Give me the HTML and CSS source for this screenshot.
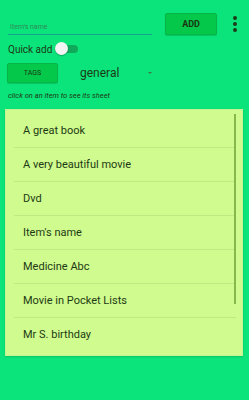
FILE: index.html
```html
<!DOCTYPE html>
<html lang="en">
<head>
  <meta charset="UTF-8">
  <meta name="viewport" content="width=device-width, initial-scale=1.0">
  <title>Pocket Lists</title>
  <link rel="stylesheet" href="styles.css">
</head>
<body>

<div class="topRow">
  <div class="nameField">
    <input type="text" class="nameInput" placeholder="Item's name">
  </div>
  <button class="addButton">ADD</button>
  <div class="menuDots">
    <span></span><span></span><span></span>
  </div>
</div>

<div class="quickRow">
  <span class="quickLabel">Quick add</span>
  <div class="switch">
    <div class="track"></div>
    <div class="thumb"></div>
  </div>
</div>

<div class="tagsRow">
  <button class="tagsButton">TAGS</button>
  <div class="tagSelect">
    <span class="tagName">general</span>
    <span class="arrow"></span>
  </div>
</div>

<p class="hint">click on an item to see its sheet</p>

<div class="listPanel">
  <ul class="itemList">
    <li>A great book</li>
    <li>A very beautiful movie</li>
    <li>Dvd</li>
    <li>Item's name</li>
    <li>Medicine Abc</li>
    <li>Movie in Pocket Lists</li>
    <li>Mr S. birthday</li>
  </ul>
  <div class="scrollBar"></div>
</div>

</body>
</html>
```

FILE: styles.css
```css
body {
  margin: 0;
  padding: 0;
  width: 249px;
  height: 400px;
  background: #0be47b;
  font-family: Roboto, "Noto Sans", sans-serif;
  color: #1f3814;
}

/* top bar: name input + add button + overflow menu */
.topRow {
  display: flex;
  align-items: center;
  padding: 13px 0 0 8px;
  height: 22px;
}

.nameField {
  width: 144px;
  height: 22px;
  display: flex;
  align-items: flex-end;
}

.nameInput {
  width: 100%;
  border: none;
  border-bottom: 1px solid #1a9f93;
  background: none;
  outline: none;
  font-family: inherit;
  font-size: 7px;
  padding: 0 0 3px 2px;
  color: #1f3814;
}

.nameInput::placeholder {
  color: #2f8a5a;
}

.addButton {
  margin-left: 13px;
  width: 52px;
  height: 22px;
  background: #04c84a;
  border: 1px solid #06b544;
  border-radius: 2px;
  box-shadow: 0 1px 1px rgba(0, 0, 0, 0.15);
  font-family: inherit;
  font-size: 9px;
  font-weight: 700;
  color: #1b3512;
  padding: 0;
}

.menuDots {
  margin-left: 16px;
  display: flex;
  flex-direction: column;
  gap: 2px;
}

.menuDots span {
  width: 4px;
  height: 4px;
  border-radius: 50%;
  background: #1d3a1a;
}

/* quick add switch */
.quickRow {
  display: flex;
  align-items: center;
  padding: 7px 0 0 8px;
  height: 14px;
}

.quickLabel {
  font-size: 10px;
  color: #1d3a14;
}

.switch {
  position: relative;
  width: 24px;
  height: 14px;
  margin-left: 3px;
}

.track {
  position: absolute;
  left: 4px;
  top: 3px;
  width: 19px;
  height: 8px;
  border-radius: 4px;
  background: #10a85a;
}

.thumb {
  position: absolute;
  left: 0;
  top: 0;
  width: 13px;
  height: 13px;
  border-radius: 50%;
  background: #f4f4f4;
  box-shadow: 0 1px 1px rgba(0, 0, 0, 0.25);
}

/* tags row */
.tagsRow {
  display: flex;
  align-items: center;
  padding: 7px 0 0 7px;
  height: 20px;
}

.tagsButton {
  width: 51px;
  height: 20px;
  background: #04c84a;
  border: 1px solid #06b544;
  border-radius: 2px;
  box-shadow: 0 1px 1px rgba(0, 0, 0, 0.15);
  font-family: inherit;
  font-size: 7px;
  color: #1b3512;
  padding: 0;
}

.tagSelect {
  display: flex;
  align-items: center;
  margin-left: 22px;
  width: 72px;
}

.tagName {
  font-size: 12px;
  color: #1d3a14;
  flex: 1;
}

.arrow {
  width: 0;
  height: 0;
  border-left: 2px solid transparent;
  border-right: 2px solid transparent;
  border-top: 2px solid #3a7a4a;
}

.hint {
  margin: 0;
  padding: 8px 0 0 8px;
  height: 12px;
  font-size: 7.5px;
  font-style: italic;
  color: #1d3a14;
}

/* items list */
.listPanel {
  position: relative;
  margin: 6px 6px 0 5px;
  background: #d0fb8e;
  border: 1px solid #c3f596;
  box-shadow: 0 1px 2px rgba(0, 80, 0, 0.2);
  padding: 4px 0 4px 0;
}

.itemList {
  list-style: none;
  margin: 0;
  padding: 0 6px 0 8px;
}

.itemList li {
  height: 33px;
  line-height: 33px;
  padding-left: 9px;
  font-size: 11px;
  color: #1d3a14;
  border-bottom: 1px solid #bfe983;
}

.itemList li:last-child {
  border-bottom: none;
}

.scrollBar {
  position: absolute;
  right: 6px;
  top: 4px;
  width: 2px;
  height: 190px;
  background: #87b84e;
}
```
